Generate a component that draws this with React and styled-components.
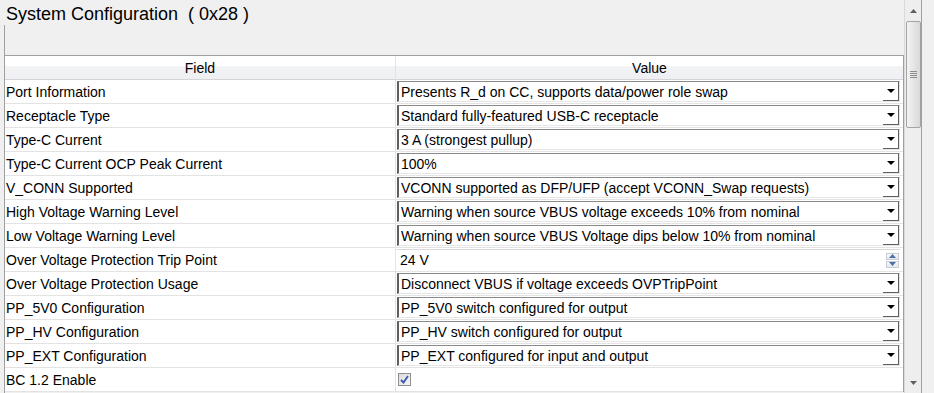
import { Fragment } from "react";
import styled, { createGlobalStyle } from "styled-components";

const GlobalStyle = createGlobalStyle`
    html, body {
        margin: 0;
        padding: 0;
        background: #f0f0f0;
    }
    * {
        box-sizing: border-box;
    }
`;

const rows = [
    { field: "Port Information", value: "Presents R_d on CC, supports data/power role swap", kind: "combo" },
    { field: "Receptacle Type", value: "Standard fully-featured USB-C receptacle", kind: "combo" },
    { field: "Type-C Current", value: "3 A (strongest pullup)", kind: "combo" },
    { field: "Type-C Current OCP Peak Current", value: "100%", kind: "combo" },
    { field: "V_CONN Supported", value: "VCONN supported as DFP/UFP (accept VCONN_Swap requests)", kind: "combo" },
    { field: "High Voltage Warning Level", value: "Warning when source VBUS voltage exceeds 10% from nominal", kind: "combo" },
    { field: "Low Voltage Warning Level", value: "Warning when source VBUS Voltage dips below 10% from nominal", kind: "combo" },
    { field: "Over Voltage Protection Trip Point", value: "24 V", kind: "spin" },
    { field: "Over Voltage Protection Usage", value: "Disconnect VBUS if voltage exceeds OVPTripPoint", kind: "combo" },
    { field: "PP_5V0 Configuration", value: "PP_5V0 switch configured for output", kind: "combo" },
    { field: "PP_HV Configuration", value: "PP_HV switch configured for output", kind: "combo" },
    { field: "PP_EXT Configuration", value: "PP_EXT configured for input and output", kind: "combo" },
    { field: "BC 1.2 Enable", value: true, kind: "check" },
];

// whole window
const Window = styled.div`
    display: flex;
    width: 934px;
    height: 393px;
    overflow: hidden;
    background: #f0f0f0;
    font-family: "Liberation Sans", Arial, sans-serif;
    color: #000;
`;

const Main = styled.div`
    flex: 0 0 904px;
    display: flex;
    flex-direction: column;
`;

const Title = styled.div`
    height: 25px;
    padding: 4px 0 0 6px;
    font-size: 18px;
    line-height: 20px;
    white-space: pre;
`;

const Body = styled.div`
    flex: 1;
    margin-left: 4px;
    padding-top: 30px;
    border-left: 1px solid #a0a0a0;
    overflow: hidden;
`;

const Table = styled.div`
    display: grid;
    grid-template-columns: 391px 1fr;
    grid-auto-rows: 24px;
    background: #fff;
    border-top: 1px solid #a0a0a0;
    border-right: 1px solid #a0a0a0;
`;

const HeadCell = styled.div`
    display: flex;
    align-items: flex-end;
    justify-content: center;
    padding-bottom: 3px;
    font-size: 14px;
    background: linear-gradient(#ffffff 0%, #ffffff 42%, #f1f3f5 45%, #eef0f3 100%);
    border-bottom: 1px solid #d5d5d5;
    border-right: ${(p) => (p.$last ? "none" : "1px solid #e3e3e3")};
`;

const FieldCell = styled.div`
    display: flex;
    align-items: center;
    padding-left: 1px;
    font-size: 14px;
    border-bottom: 1px solid #e3e3e3;
    border-right: 1px solid #e3e3e3;
    white-space: nowrap;
`;

const ValueCell = styled.div`
    display: flex;
    align-items: center;
    padding: 0 3px 0 1px;
    border-bottom: 1px solid #e3e3e3;
`;

const Combo = styled.div`
    flex: 1;
    height: 21px;
    display: flex;
    align-items: center;
    border-style: solid;
    border-width: 1px 1px 1px 2px;
    border-color: #8a8a8a #e6e6e6 #e6e6e6 #5e5e5e;
    background: #fff;
    font-size: 14px;
    padding-left: 2px;
`;

const ComboText = styled.span`
    flex: 1;
    white-space: nowrap;
    overflow: hidden;
`;

const ArrowButton = styled.div`
    width: 16px;
    height: 19px;
    display: flex;
    align-items: center;
    justify-content: center;
    border-right: 1px solid #5e5e5e;
    border-bottom: 1px solid #5e5e5e;
    margin-left: auto;
`;

const SpinBox = styled.div`
    flex: 1;
    height: 21px;
    display: flex;
    align-items: center;
    border-top: 1px solid #d8d8d8;
    font-size: 14px;
    padding-left: 3px;
`;

const SpinButtons = styled.div`
    display: flex;
    flex-direction: column;
    gap: 1px;
    margin-left: auto;
    margin-right: 1px;
`;

const SpinButton = styled.div`
    width: 13px;
    height: 7px;
    display: flex;
    align-items: center;
    justify-content: center;
    border: 1px solid #c9ccd2;
    background: linear-gradient(#f7f8fa, #e4e7ec);
`;

const CheckBox = styled.div`
    width: 13px;
    height: 13px;
    margin-left: 1px;
    border: 1px solid #8e8f8f;
    background: linear-gradient(135deg, #dcdcdc, #f6f6f6);
    display: flex;
    align-items: center;
    justify-content: center;
`;

// scroll bar on the right
const ScrollBar = styled.div`
    flex: 0 0 18px;
    display: flex;
    flex-direction: column;
    align-items: center;
    background: #eeeeee;
    border-left: 1px solid #dadada;
    border-right: 1px solid #a0a0a0;
`;

const ScrollArrow = styled.div`
    height: 21px;
    width: 100%;
    display: flex;
    align-items: center;
    justify-content: center;
`;

const Thumb = styled.div`
    width: 15px;
    height: 107px;
    border: 1px solid #a3a3a3;
    border-radius: 2px;
    background: linear-gradient(90deg, #f4f4f4, #e3e3e3 60%, #d9d9d9);
    display: flex;
    align-items: center;
    justify-content: center;
`;

const Track = styled.div`
    flex: 1;
`;

const Grip = styled.div`
    width: 7px;
    height: 7px;
    background: repeating-linear-gradient(#8c8c8c 0 1px, transparent 1px 2px);
`;

const Tri = ({ up, color = "#000", w = 8, h = 4 }) => (
    <svg width={w} height={h} viewBox={`0 0 ${w} ${h}`}>
        <polygon points={up ? `0,${h} ${w},${h} ${w / 2},0` : `0,0 ${w},0 ${w / 2},${h}`} fill={color} />
    </svg>
);

const renderValue = (row) => {
    if (row.kind === "combo") {
        return (
            <Combo>
                <ComboText>{row.value}</ComboText>
                <ArrowButton>
                    <Tri w={8} h={4} />
                </ArrowButton>
            </Combo>
        );
    }
    if (row.kind === "spin") {
        return (
            <SpinBox>
                <ComboText>{row.value}</ComboText>
                <SpinButtons>
                    <SpinButton>
                        <Tri up w={7} h={4} color="#4f6fa8" />
                    </SpinButton>
                    <SpinButton>
                        <Tri w={7} h={4} color="#4f6fa8" />
                    </SpinButton>
                </SpinButtons>
            </SpinBox>
        );
    }
    return (
        <CheckBox>
            <svg width="9" height="9" viewBox="0 0 9 9">
                <path d="M1 5 L3.5 7.5 L8 1" stroke="#3b56b0" strokeWidth="1.8" fill="none" />
            </svg>
        </CheckBox>
    );
};

const App = () => {
    return (
        <>
            <GlobalStyle />
            <Window>
                <Main>
                    <Title>System Configuration  ( 0x28 )</Title>
                    <Body>
                        <Table>
                            <HeadCell>Field</HeadCell>
                            <HeadCell $last>Value</HeadCell>
                            {rows.map((row) => (
                                <Fragment key={row.field}>
                                    <FieldCell>{row.field}</FieldCell>
                                    <ValueCell>{renderValue(row)}</ValueCell>
                                </Fragment>
                            ))}
                        </Table>
                    </Body>
                </Main>
                <ScrollBar>
                    <ScrollArrow>
                        <Tri up w={7} h={4} color="#606060" />
                    </ScrollArrow>
                    <Thumb>
                        <Grip />
                    </Thumb>
                    <Track />
                    <ScrollArrow>
                        <Tri w={7} h={4} color="#606060" />
                    </ScrollArrow>
                </ScrollBar>
            </Window>
        </>
    );
};

export default App;
